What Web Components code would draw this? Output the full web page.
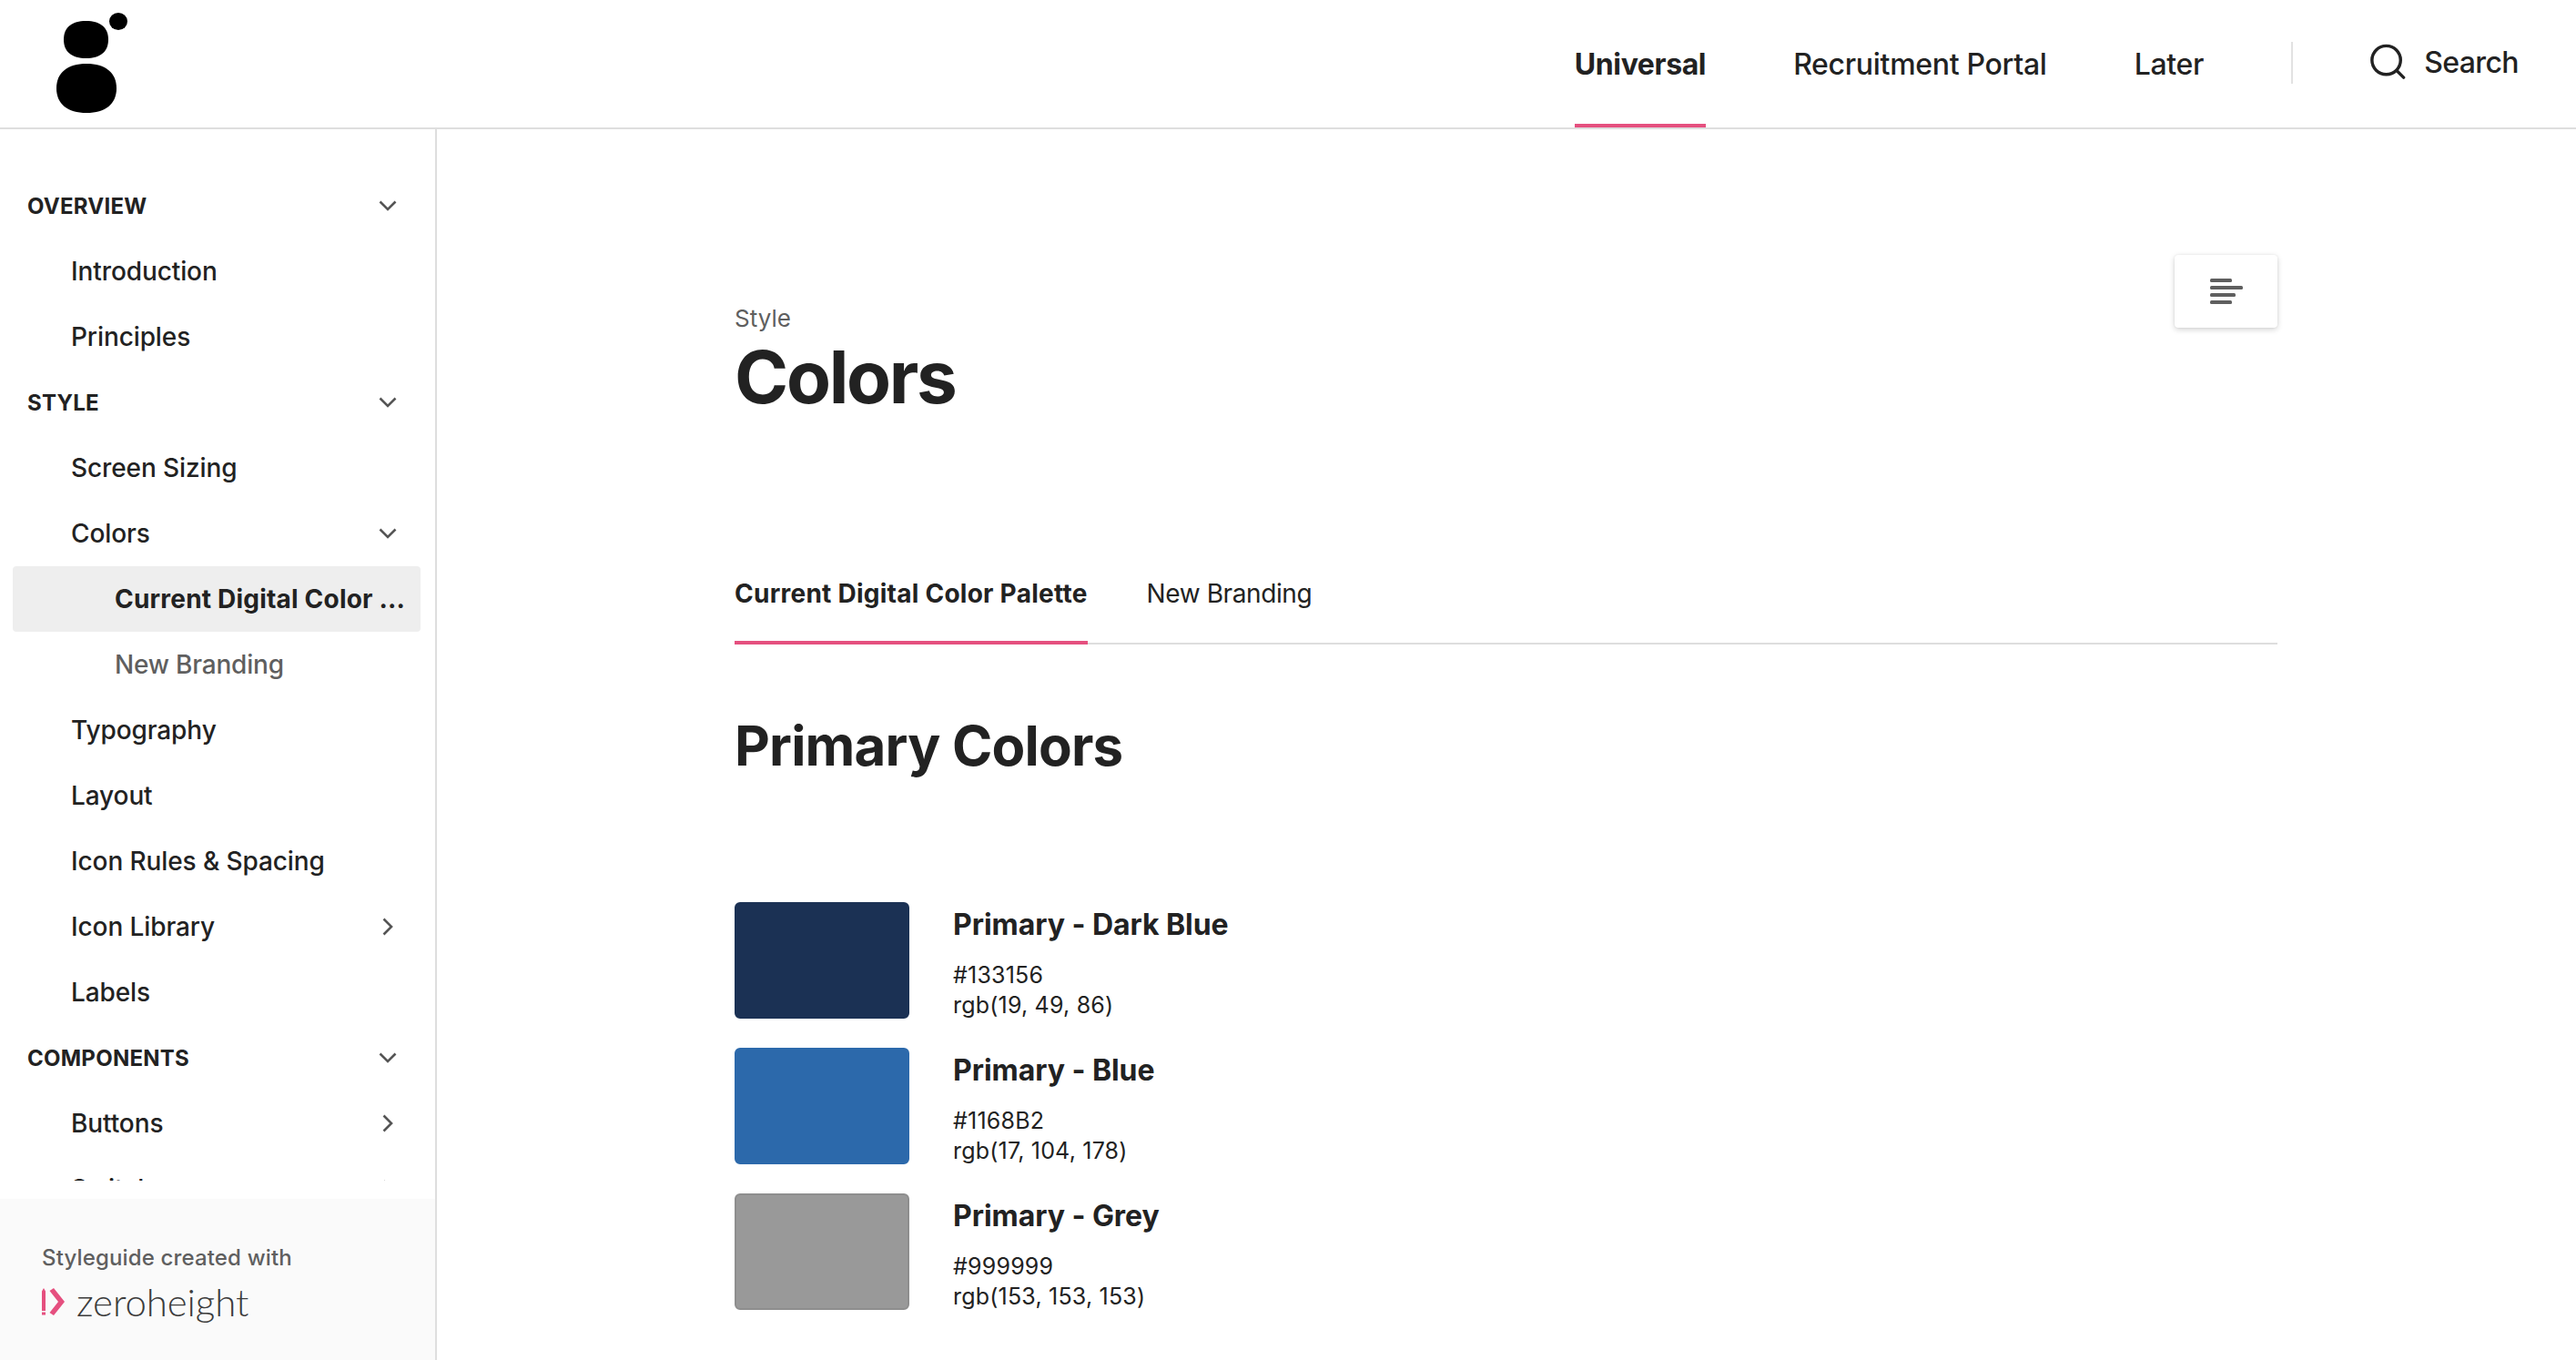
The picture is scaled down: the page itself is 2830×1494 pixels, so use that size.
<!DOCTYPE html>
<html>
<head>
<meta charset="utf-8">
<title>Colors</title>
<style>
  html, body { margin: 0; height: 100%; overflow: hidden; background: #fff; }
  body { font-family: Inter, "Noto Sans", sans-serif; color: #222; }
</style>
</head>
<body>
<style-guide>
  <site-header slot="header"></site-header>
  <side-nav slot="nav">
    <nav-row kind="head" arrow="down">OVERVIEW</nav-row>
    <nav-row>Introduction</nav-row>
    <nav-row>Principles</nav-row>
    <nav-row kind="head" arrow="down">STYLE</nav-row>
    <nav-row>Screen Sizing</nav-row>
    <nav-row arrow="down">Colors</nav-row>
    <nav-row kind="sub" active>Current Digital Color ...</nav-row>
    <nav-row kind="sub">New Branding</nav-row>
    <nav-row>Typography</nav-row>
    <nav-row>Layout</nav-row>
    <nav-row>Icon Rules &amp; Spacing</nav-row>
    <nav-row arrow="right">Icon Library</nav-row>
    <nav-row>Labels</nav-row>
    <nav-row kind="head" arrow="down">COMPONENTS</nav-row>
    <nav-row arrow="right">Buttons</nav-row>
    <nav-row arrow="right">Switches</nav-row>
  </side-nav>
  <doc-page slot="page">
    <toc-button slot="toc"></toc-button>
    <span slot="crumb">Style</span>
    <span slot="title">Colors</span>
    <tab-bar slot="tabs"></tab-bar>
    <span slot="section">Primary Colors</span>
    <color-swatch color="#1b3154" name="Primary - Dark Blue" hex="#133156" rgb="rgb(19, 49, 86)"></color-swatch>
    <color-swatch color="#2c69ab" name="Primary - Blue" hex="#1168B2" rgb="rgb(17, 104, 178)"></color-swatch>
    <color-swatch color="#999999" edge="#8e8e8e" name="Primary - Grey" hex="#999999" rgb="rgb(153, 153, 153)"></color-swatch>
  </doc-page>
</style-guide>

<script>
class StyleGuide extends HTMLElement {
  constructor() {
    super();
    this.attachShadow({mode: "open"});
    this.shadowRoot.innerHTML = `
      <style>
        :host { display: flex; flex-direction: column; height: 1494px; overflow: hidden; }
        .body { flex: 1; display: flex; min-height: 0; }
      </style>
      <slot name="header"></slot>
      <div class="body">
        <slot name="nav"></slot>
        <slot name="page"></slot>
      </div>
    `;
  }
}

class SiteHeader extends HTMLElement {
  constructor() {
    super();
    this.attachShadow({mode: "open"});
    this.shadowRoot.innerHTML = `
      <style>
        :host { display: flex; align-items: stretch; height: 140px; border-bottom: 2px solid #dedede; flex: none; }
        .logo { margin: 14px 0 0 62px; width: 80px; height: 112px; display: block; }
        nav { margin-left: auto; display: flex; gap: 96px; }
        a { display: flex; align-items: center; font-size: 32px; font-weight: 500; color: #222; height: 140px; box-sizing: border-box; position: relative; letter-spacing: -0.3px; }
        a.on { font-weight: 700; letter-spacing: -0.4px; }
        a.on::after { content: ""; position: absolute; left: 0; right: 0; bottom: 0; height: 4px; background: #e5507f; }
        .sep { width: 2px; height: 46px; background: #e2e2e2; align-self: flex-start; margin: 46px 0 0 96px; }
        .search { display: flex; align-items: center; gap: 20px; margin: 0 63px 0 84px; height: 136px; font-size: 32px; font-weight: 500; letter-spacing: -0.6px; }
        .search svg { display: block; width: 40px; height: 40px; }
      </style>
      <svg class="logo" viewBox="0 0 80 112">
        <ellipse cx="68" cy="9.500" rx="10" ry="9.500"/>
        <path d="M8 29.500C8 16 17 9 32.500 9C48 9 57 16 57 29.500C57 43 48 50 32.500 50C17 50 8 43 8 29.500Z"/>
        <path d="M0 83C0 66 12 56 33 56C54 56 66 66 66 83C66 100 54 110 33 110C12 110 0 100 0 83Z"/>
      </svg>
      <nav>
        <a class="on">Universal</a>
        <a>Recruitment Portal</a>
        <a>Later</a>
      </nav>
      <div class="sep"></div>
      <div class="search">
        <svg viewBox="0 0 42 42" fill="none" stroke="#222" stroke-width="3.600" stroke-linecap="round">
          <circle cx="19.500" cy="19" r="16.500"/>
          <path d="M31.500 31l8 8"/>
        </svg>
        <span>Search</span>
      </div>
    `;
  }
}

class SideNav extends HTMLElement {
  constructor() {
    super();
    this.attachShadow({mode: "open"});
    this.shadowRoot.innerHTML = `
      <style>
        :host { display: flex; flex-direction: column; width: 478px; flex: none; border-right: 2px solid #dedede; height: 100%; }
        .list { flex: 1; min-height: 0; overflow: hidden; padding-top: 48px; margin-bottom: 20px; }
        footer { flex: none; height: 177px; background: #fafafa; box-sizing: border-box; padding: 49px 0 0 46px; }
        .made { font-size: 24px; font-weight: 500; color: #5f5f5f; line-height: 32px; display: block; letter-spacing: 0.15px; }
        .brand { display: flex; align-items: center; gap: 12px; margin-top: 8px; }
        .brand svg { width: 26px; height: 30px; display: block; }
        .word { font-family: Lato, sans-serif; font-weight: 300; font-size: 42px; line-height: 48px; color: #3c3c3c; letter-spacing: -0.1px; }
      </style>
      <div class="list"><slot></slot></div>
      <footer>
        <span class="made">Styleguide created with</span>
        <div class="brand">
          <svg viewBox="0 0 26 30">
            <path d="M0 3.500L2 0L4 3.500V25H0ZM0 26.500H4V29.500H0Z" fill="#e5507f"/>
            <path d="M13 0L25 15L13 30L8.500 27L18 15L8.500 3Z" fill="#e5507f"/>
          </svg>
          <span class="word">zeroheight</span>
        </div>
      </footer>
    `;
  }
}

class NavRow extends HTMLElement {
  constructor() {
    super();
    this.attachShadow({mode: "open"});
  }
  arrow(dir) {
    if(dir === "down") {
      return `<svg class="arrow" viewBox="0 0 20 20"><path d="M1.500 5.500L10 14L18.500 5.500"/></svg>`;
    }else if(dir === "right") {
      return `<svg class="arrow" viewBox="0 0 20 20"><path d="M5.500 1.500L14 10L5.500 18.500"/></svg>`;
    }
    return "";
  }
  connectedCallback() {
    const kind = this.getAttribute("kind");
    const active = this.hasAttribute("active");
    let left = 78, size = 28, weight = 500, color = "#222", spacing = "-0.1px";
    if(kind === "head") {
      left = 30; size = 24; weight = 700; spacing = "0.25px";
    }else if(kind === "sub") {
      left = 126; color = active ? "#222" : "#5f5f5f";
      spacing = "-0.2px";
      if(active) {
        weight = 700;
        spacing = "0.2px";
      }
    }
    this.shadowRoot.innerHTML = `
      <style>
        :host { display: block; height: 72px; }
        .row { position: relative; height: 72px; display: flex; align-items: center; font-size: ${size}px; font-weight: ${weight}; color: ${color}; letter-spacing: ${spacing}; white-space: nowrap; padding-left: ${left}px; box-sizing: border-box; }
        .row.on { background: #eeeeee; border-radius: 4px; margin: 0 16px 0 14px; padding-left: ${left - 14}px; }
        .arrow { position: absolute; right: 42px; top: 26px; width: 20px; height: 20px; fill: none; stroke: #555; stroke-width: 2.600; }
      </style>
      <div class="row ${active ? "on" : ""}"><span><slot></slot></span>${this.arrow(this.getAttribute("arrow"))}</div>
    `;
  }
}

class DocPage extends HTMLElement {
  constructor() {
    super();
    this.attachShadow({mode: "open"});
    this.shadowRoot.innerHTML = `
      <style>
        :host { display: block; flex: 1; min-width: 0; position: relative; }
        .col { width: 1695px; margin-left: 327px; position: relative; padding-top: 192px; }
        .toc { position: absolute; top: 138px; right: 0; }
        .crumb { display: block; font-size: 26px; line-height: 32px; color: #5f5f5f; }
        h1 { margin: 0; font-size: 80px; line-height: 96px; font-weight: 700; letter-spacing: -2.300px; }
        .tabs { margin-top: 156px; }
        h2 { margin: 71px 0 0; font-size: 60px; line-height: 80px; font-weight: 700; letter-spacing: -0.800px; }
        .list { margin-top: 132px; display: flex; flex-direction: column; gap: 32px; }
      </style>
      <div class="col">
        <div class="toc"><slot name="toc"></slot></div>
        <span class="crumb"><slot name="crumb"></slot></span>
        <h1><slot name="title"></slot></h1>
        <div class="tabs"><slot name="tabs"></slot></div>
        <h2><slot name="section"></slot></h2>
        <div class="list"><slot></slot></div>
      </div>
    `;
  }
}

class TocButton extends HTMLElement {
  constructor() {
    super();
    this.attachShadow({mode: "open"});
    this.shadowRoot.innerHTML = `
      <style>
        :host { display: flex; width: 113px; height: 80px; background: #fff; border-radius: 4px; box-shadow: 0 2px 6px rgba(0,0,0,.18), 0 0 2px rgba(0,0,0,.08); align-items: center; justify-content: center; }
        svg { width: 36px; height: 28px; display: block; fill: #5f5f5f; }
      </style>
      <svg viewBox="0 0 36 28">
        <rect x="0" y="0" width="24" height="4" rx="1.500"/>
        <rect x="0" y="8" width="36" height="4" rx="1.500"/>
        <rect x="0" y="16" width="28" height="4" rx="1.500"/>
        <rect x="0" y="24" width="24" height="4" rx="1.500"/>
      </svg>
    `;
  }
}

class TabBar extends HTMLElement {
  constructor() {
    super();
    this.attachShadow({mode: "open"});
    this.shadowRoot.innerHTML = `
      <style>
        :host { display: flex; gap: 65px; border-bottom: 2px solid #dedede; height: 88px; font-size: 28px; }
        div { height: 90px; box-sizing: border-box; padding-top: 16px; line-height: 36px; font-weight: 400; letter-spacing: -0.4px; }
        .on { font-weight: 700; letter-spacing: 0.25px; border-bottom: 4px solid #e5507f; }
      </style>
      <div class="on">Current Digital Color Palette</div>
      <div>New Branding</div>
    `;
  }
}

class ColorSwatch extends HTMLElement {
  constructor() {
    super();
    this.attachShadow({mode: "open"});
  }
  connectedCallback() {
    const edge = this.getAttribute("edge") || this.getAttribute("color");
    this.shadowRoot.innerHTML = `
      <style>
        :host { display: flex; gap: 48px; height: 128px; }
        .chip { width: 192px; height: 128px; box-sizing: border-box; border-radius: 6px; background: ${this.getAttribute("color")}; border: 2px solid ${edge}; flex: none; }
        b { display: block; font-size: 32px; font-weight: 700; letter-spacing: -0.05px; line-height: 48px; margin-top: 1px; }
        span { display: block; font-size: 25px; line-height: 32.500px; letter-spacing: 0.2px; }
        .hex { margin-top: 15px; }
      </style>
      <div class="chip"></div>
      <div>
        <b>${this.getAttribute("name")}</b>
        <span class="hex">${this.getAttribute("hex")}</span>
        <span>${this.getAttribute("rgb")}</span>
      </div>
    `;
  }
}

window.customElements.define("style-guide", StyleGuide);
window.customElements.define("site-header", SiteHeader);
window.customElements.define("side-nav", SideNav);
window.customElements.define("nav-row", NavRow);
window.customElements.define("doc-page", DocPage);
window.customElements.define("toc-button", TocButton);
window.customElements.define("tab-bar", TabBar);
window.customElements.define("color-swatch", ColorSwatch);
</script>
</body>
</html>
